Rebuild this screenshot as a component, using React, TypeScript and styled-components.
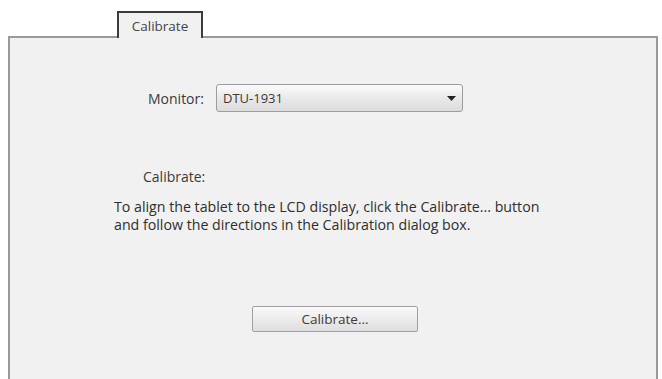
import React from "react";
import styled, { createGlobalStyle } from "styled-components";

const Global = createGlobalStyle`
  html, body { margin: 0; padding: 0; background: #ffffff; }
  body { font-family: "Open Sans", "Noto Sans", sans-serif; color: #333; overflow: hidden; }
`;

const Page = styled.div`
  padding: 11px 0 0 8px;
  width: 662px;
  height: 379px;
  box-sizing: border-box;
  display: flex;
  flex-direction: column;
`;

const TabStrip = styled.div`
  display: flex;
  padding-left: 109px;
  position: relative;
  z-index: 1;
  margin-bottom: -2px;
`;

const Tab = styled.div`
  width: 86px;
  height: 27px;
  box-sizing: border-box;
  border: 2px solid #3c3c3c;
  border-bottom: none;
  background: #f1f1f1;
  display: flex;
  align-items: center;
  justify-content: center;
  font-size: 13.5px;
  color: #444;
  padding-top: 1px;
`;

const Panel = styled.div`
  width: 650px;
  flex: 1;
  box-sizing: border-box;
  border: 2px solid #9a9a9a;
  border-bottom: none;
  background: #f1f1f1;
  display: flex;
  flex-direction: column;
  padding: 46px 0 0 104px;
`;

const Row = styled.div<{ $indent: number; $top?: number }>`
  display: flex;
  align-items: center;
  padding-left: ${(p) => p.$indent}px;
  margin-top: ${(p) => p.$top ?? 0}px;
`;

const Label = styled.span`
  font-size: 14px;
  color: #3a3a3a;
`;

const Select = styled.div`
  margin-left: 12px;
  width: 247px;
  height: 28px;
  box-sizing: border-box;
  border: 1px solid #9d9d9d;
  border-radius: 3px;
  background: linear-gradient(#fbfbfb, #e9e9e9 50%, #dcdcdc);
  display: flex;
  align-items: center;
  justify-content: space-between;
  padding: 0 6px 0 6px;
  font-size: 13px;
  color: #3a3a3a;
`;

const Arrow = styled.svg`
  width: 9px;
  height: 5px;
  display: block;
`;

const Paragraph = styled.p`
  margin: 12px 0 0 0;
  font-size: 14.2px;
  line-height: 18px;
  color: #2e2e2e;
`;

const ButtonRow = styled.div`
  display: flex;
  padding: 72px 0 0 138px;
`;

const Button = styled.div`
  width: 166px;
  height: 26px;
  box-sizing: border-box;
  border: 1px solid #a0a0a0;
  border-radius: 2px;
  background: linear-gradient(#fafafa, #ececec 50%, #dedede);
  display: flex;
  align-items: center;
  justify-content: center;
  font-size: 13.5px;
  color: #3a3a3a;
`;

export default function App() {
  return (
    <>
      <Global />
      <Page>
        <TabStrip>
          <Tab>Calibrate</Tab>
        </TabStrip>
        <Panel>
          <Row $indent={34}>
            <Label>Monitor:</Label>
            <Select>
              <span>DTU-1931</span>
              <Arrow viewBox="0 0 9 5">
                <path d="M0 0 H9 L4.5 5 Z" fill="#222" />
              </Arrow>
            </Select>
          </Row>
          <Row $indent={29} $top={55}>
            <Label>Calibrate:</Label>
          </Row>
          <Paragraph>
            To align the tablet to the LCD display, click the Calibrate... button
            <br />
            and follow the directions in the Calibration dialog box.
          </Paragraph>
          <ButtonRow>
            <Button>Calibrate...</Button>
          </ButtonRow>
        </Panel>
      </Page>
    </>
  );
}
